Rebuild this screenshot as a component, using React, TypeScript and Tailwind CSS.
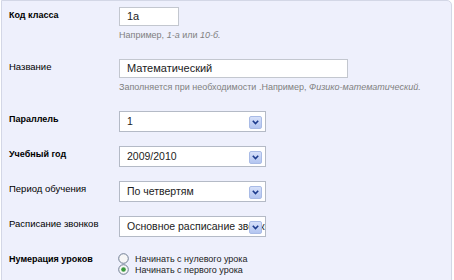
import React from "react";

function Arrow() {
  return (
    <div className="absolute right-[3px] top-[4px] w-[13px] h-[13px] rounded-[2px] border border-[#a9bbe6] bg-gradient-to-b from-[#d6e0fa] to-[#b3c5f0] flex items-center justify-center">
      <svg width="7" height="5" viewBox="0 0 7 5">
        <path d="M0.8 0.8 L3.5 3.6 L6.2 0.8" fill="none" stroke="#1c3a8c" strokeWidth="1.6" />
      </svg>
    </div>
  );
}

function Select({ value }: { value: string }) {
  return (
    <div className="relative w-[147px] h-[21px] bg-white border border-[#b4bac6] overflow-hidden">
      <div className="pl-[7px] pr-[2px] leading-[19px] text-[10.5px] text-[#222] whitespace-nowrap overflow-hidden">
        {value}
      </div>
      <Arrow />
    </div>
  );
}

function Radio({ checked }: { checked?: boolean }) {
  return (
    <svg width="11" height="11" viewBox="0 0 11 11" className="shrink-0">
      <circle cx="5.5" cy="5.5" r="4.8" fill="#f6f6f6" stroke="#6f7d92" strokeWidth="1" />
      {checked && <circle cx="5.5" cy="5.5" r="2.3" fill="#3a9a3c" />}
    </svg>
  );
}

function Label({ children, bold }: { children: React.ReactNode; bold?: boolean }) {
  return (
    <div
      className={`w-[110px] shrink-0 pt-[2px] leading-[12px] text-[#000] ${bold ? "font-bold text-[9px]" : "text-[9.5px]"}`}
    >
      {children}
    </div>
  );
}

export default function App() {
  return (
    <div className="w-[454px] h-[280px] bg-white overflow-hidden" style={{ fontFamily: '"Liberation Sans", Arial, sans-serif' }}>
      <div className="ml-px mr-[2px] h-[290px] bg-[#eef0fc] border border-[#d3d7e6] rounded-tr-[5px] pl-[7px]">
        {/* Row 1 */}
        <div className="flex pt-[6px]">
          <Label bold>Код класса</Label>
          <div>
            <div className="w-[60px] h-[19px] bg-white border border-[#c3c7cf] pl-[7px] text-[11px] leading-[17px] text-[#222]">1а</div>
            <div className="mt-[3px] text-[9px] leading-[12px] text-[#808080]">
              Например, <i>1-а</i> или <i>10-б.</i>
            </div>
          </div>
        </div>
        {/* Row 2 */}
        <div className="flex mt-[18px]">
          <Label>Название</Label>
          <div>
            <div className="w-[229px] h-[19px] bg-white border border-[#c3c7cf] pl-[7px] text-[11px] leading-[17px] text-[#222]">Математический</div>
            <div className="mt-[3px] text-[9px] leading-[12px] text-[#808080] whitespace-nowrap">
              Заполняется при необходимости .Например, <i>Физико-математический.</i>
            </div>
          </div>
        </div>
        {/* Selects */}
        <div className="flex mt-[18px]">
          <Label bold>Параллель</Label>
          <Select value="1" />
        </div>
        <div className="flex mt-[14px]">
          <Label bold>Учебный год</Label>
          <Select value="2009/2010" />
        </div>
        <div className="flex mt-[14px]">
          <Label>Период обучения</Label>
          <Select value="По четвертям" />
        </div>
        <div className="flex mt-[14px]">
          <Label>Расписание звонков</Label>
          <Select value="Основное расписание звонков" />
        </div>
        {/* Radios */}
        <div className="flex mt-[14px]">
          <Label bold>Нумерация уроков</Label>
          <div className="flex flex-col -ml-[1px] pt-[2px] text-[9px] leading-[10px] text-[#222]">
            <div className="flex items-center gap-[6px]">
              <Radio />
              <span>Начинать с нулевого урока</span>
            </div>
            <div className="flex items-center gap-[6px]">
              <Radio checked />
              <span>Начинать с первого урока</span>
            </div>
          </div>
        </div>
      </div>
    </div>
  );
}
